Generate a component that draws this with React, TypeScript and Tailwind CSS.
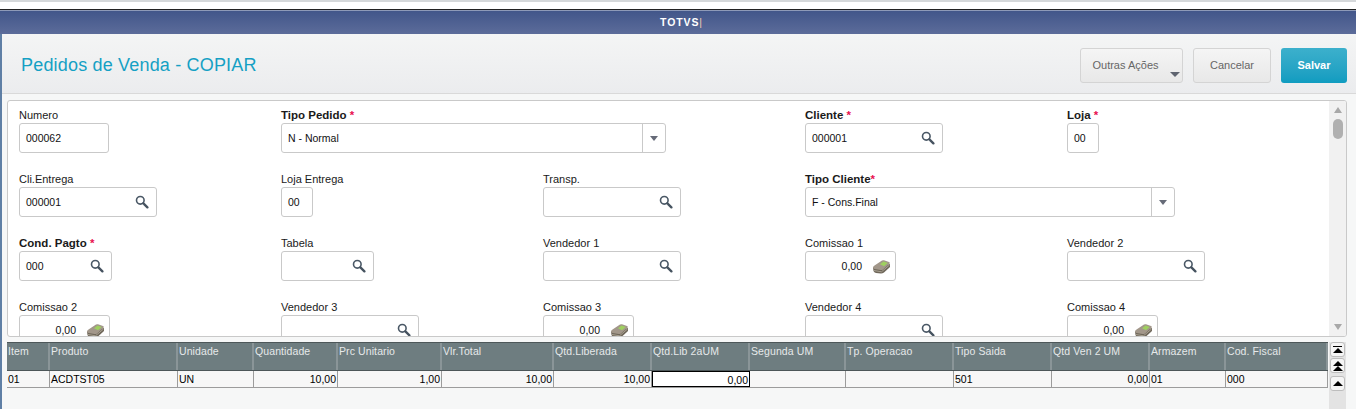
const font = "font-['Liberation_Sans',Arial,sans-serif]";

function Lupa() {
  return (
    <svg width="14" height="14" viewBox="0 0 14 14" className="shrink-0">
      <circle cx="5.3" cy="5.3" r="3.8" fill="#fff" stroke="#4a5866" strokeWidth="1.6" />
      <path d="M8.4 8.4 L12.4 12.4" stroke="#45525f" strokeWidth="2.3" strokeLinecap="round" />
    </svg>
  );
}

function Dinheiro() {
  return (
    <svg width="19" height="15" viewBox="0 0 19 15" className="shrink-0">
      <path d="M1 8.5 L1.5 12 Q2 13.5 4 14 L9 14.5 Q10.5 14.5 12 13.5 L18 8 L18 5 Z" fill="#6f675a" />
      <path d="M1 8.5 Q1 7.5 2.5 6.5 L10 1.5 Q11 1 12 1.3 L17 3 Q18.5 3.6 17.5 4.8 L11 10.5 Q10 11.3 8.5 11 L2.5 10 Q1 9.7 1 8.5 Z" fill="#a2978a" />
      <path d="M8 5.2 L11.5 2.4 L15.8 4 L12 7.2 Z" fill="#9fd05f" />
      <path d="M2 11.5 L9.5 12.8 L17.5 6" fill="none" stroke="#c2baa9" strokeWidth="0.7" />
    </svg>
  );
}

type Campo = {
  label: string;
  w?: number;
  kind?: 'text' | 'lupa' | 'select' | 'valor';
  value?: string;
  bold?: boolean;
  req?: string;
};

const campos: (Campo | null)[] = [
  { label: 'Numero', w: 90, value: '000062' },
  { label: 'Tipo Pedido', w: 385, kind: 'select', value: 'N - Normal', bold: true, req: ' *' },
  null,
  { label: 'Cliente', w: 138, kind: 'lupa', value: '000001', bold: true, req: ' *' },
  { label: 'Loja', w: 32, value: '00', bold: true, req: ' *' },

  { label: 'Cli.Entrega', w: 138, kind: 'lupa', value: '000001' },
  { label: 'Loja Entrega', w: 32, value: '00' },
  { label: 'Transp.', w: 138, kind: 'lupa' },
  { label: 'Tipo Cliente', w: 370, kind: 'select', value: 'F - Cons.Final', bold: true, req: '*' },
  null,

  { label: 'Cond. Pagto', w: 93, kind: 'lupa', value: '000', bold: true, req: ' *' },
  { label: 'Tabela', w: 93, kind: 'lupa' },
  { label: 'Vendedor 1', w: 138, kind: 'lupa' },
  { label: 'Comissao 1', w: 91, kind: 'valor', value: '0,00' },
  { label: 'Vendedor 2', w: 138, kind: 'lupa' },

  { label: 'Comissao 2', w: 91, kind: 'valor', value: '0,00' },
  { label: 'Vendedor 3', w: 138, kind: 'lupa' },
  { label: 'Comissao 3', w: 91, kind: 'valor', value: '0,00' },
  { label: 'Vendedor 4', w: 138, kind: 'lupa' },
  { label: 'Comissao 4', w: 91, kind: 'valor', value: '0,00' },
];

function Field({ c }: { c: Campo }) {
  const kind = c.kind ?? 'text';
  return (
    <div className="h-[64px]">
      <div className={`h-[15px] leading-[15px] text-[#1a1a1a] ${c.bold ? 'font-bold text-[11.5px]' : 'text-[11px]'}`}>
        {c.label}
        {c.req && <span className="text-[#e8104f]">{c.req}</span>}
      </div>
      <div
        className="h-[30px] flex items-center border border-[#c9c9c9] rounded-[3px] bg-white text-[10.5px] text-[#111]"
        style={{ width: c.w }}
      >
        {kind === 'valor' ? (
          <>
            <span className="w-[56px] pt-[1px] text-right">{c.value}</span>
            <span className="ml-[10px]"><Dinheiro /></span>
          </>
        ) : (
          <>
            <span className="flex-1 pt-[1px] pl-[6px]">{c.value}</span>
            {kind === 'lupa' && <span className="pr-[7px] flex"><Lupa /></span>}
            {kind === 'select' && (
              <span className="w-[23px] h-full border-l border-[#c9c9c9] flex items-center justify-center">
                <span className="w-0 h-0 border-x-[4px] border-x-transparent border-t-[5px] border-t-[#666b78]" />
              </span>
            )}
          </>
        )}
      </div>
    </div>
  );
}

const colunas: [string, number, string, boolean?][] = [
  ['Item', 43, '01'],
  ['Produto', 128, 'ACDTST05'],
  ['Unidade', 76, 'UN'],
  ['Quantidade', 84, '10,00', true],
  ['Prc Unitario', 104, '1,00', true],
  ['Vlr.Total', 112, '10,00', true],
  ['Qtd.Liberada', 98, '10,00', true],
  ['Qtd.Lib 2aUM', 98, '0,00', true],
  ['Segunda UM', 96, ''],
  ['Tp. Operacao', 108, ''],
  ['Tipo Saida', 98, '501'],
  ['Qtd Ven 2 UM', 98, '0,00', true],
  ['Armazem', 76, '01'],
  ['Cod. Fiscal', 102, '000'],
];

function NavBtn({ lines, top }: { lines: number; top?: boolean }) {
  return (
    <div className="w-[15px] h-[15px] rounded-[3px] border border-[#bdbdbd] bg-[#f5f5f5] flex flex-col items-center justify-center">
      {top && <span className="w-[9px] h-[1px] mb-[1px] bg-black" />}
      {Array.from({ length: lines }).map((_, i) => (
        <span key={i} className="w-0 h-0 border-x-[5px] border-x-transparent border-b-[5px] border-b-black" />
      ))}
    </div>
  );
}

export default function App() {
  return (
    <div className={`${font} w-[1356px] h-[409px] overflow-hidden bg-white`}>
      <div className="h-[2px] bg-[#d5d8da]" />
      <div className="h-[7px]" />
      <div className="h-[1px] bg-[#222]" />
      <div className="h-[24px] bg-gradient-to-b from-[#42568a] to-[#5c6c9a] border-t border-[#8e9ab8] flex items-center justify-center text-white text-[10.5px] font-bold tracking-[0.9px] pl-[7px]">
        TOTVS<span className="font-normal text-[#f3c9b0]">|</span>
      </div>
      <div className="h-[375px] border-l-2 border-[#5f7fa5] bg-[#f6f7f7] pr-[9px]">
        <div className="h-[60px] bg-gradient-to-b from-[#f4f5f5] to-[#ebecee] border-b border-[#d9d9d9] flex items-center pl-[19px] pr-[9px] pt-[3px] -mr-[9px]">
          <h1 className="flex-1 text-[18px] text-[#15a0c4] tracking-[0.18px]">Pedidos de Venda - COPIAR</h1>
          <button className="relative w-[103px] h-[35px] mr-[10px] rounded-[3px] border border-[#d4d4d4] bg-gradient-to-b from-[#f5f5f5] to-[#e8e8e8] text-[11px] text-[#666] pr-[12px]">
            Outras Ações
            <span className="absolute right-[2px] bottom-[5px] w-0 h-0 border-x-[5px] border-x-transparent border-t-[5px] border-t-[#5f6470]" />
          </button>
          <button className="w-[78px] h-[35px] mr-[10px] rounded-[3px] border border-[#d4d4d4] bg-gradient-to-b from-[#f5f5f5] to-[#e8e8e8] text-[11px] text-[#666]">
            Cancelar
          </button>
          <button className="w-[66px] h-[35px] rounded-[3px] bg-gradient-to-b from-[#3cb0cc] to-[#0f9cc0] text-[11px] font-bold text-white">
            Salvar
          </button>
        </div>

        <div className="ml-[5px] mt-[6px] h-[237px] border border-[#c9c9c9] rounded-[3px] bg-white flex overflow-hidden">
          <div className="flex-1 pl-[11px] pt-[7px] grid grid-cols-[repeat(5,262px)] content-start overflow-hidden">
            {campos.map((c, i) => (c ? <Field key={i} c={c} /> : <div key={i} />))}
          </div>
          <div className="w-[17px] bg-[#f1f1f1] flex flex-col items-center justify-between py-[6px]">
            <div className="flex flex-col items-center gap-[6px]">
              <span className="w-0 h-0 border-x-[4px] border-x-transparent border-b-[6px] border-b-[#a8a8a8]" />
              <span className="w-[10px] h-[20px] rounded-[5px] bg-[#b0b0b0]" />
            </div>
            <span className="w-0 h-0 border-x-[4px] border-x-transparent border-t-[6px] border-t-[#a8a8a8]" />
          </div>
        </div>

        <div className="ml-[5px] mt-[5px] flex">
          <div className="w-[1321px] text-[10.5px]">
            <div className="flex h-[29px] bg-[#6e7d80] border-y border-[#4d5759]">
              {colunas.map(([nome, w]) => (
                <div key={nome} className="shrink-0 border-r-2 border-[#8a9598] pl-[1px] pt-[1px] text-[#e6e9ea] leading-[14px] tracking-[0.1px]" style={{ width: w }}>
                  {nome}
                </div>
              ))}
            </div>
            <div className="flex h-[17px] bg-[#f7f7f7] border-b border-[#9c9c9c] text-black leading-[16px]">
              {colunas.map(([nome, w, valor, dir]) => (
                <div
                  key={nome}
                  className={`shrink-0 px-[1px] ${dir ? 'text-right' : ''} ${nome === 'Qtd.Lib 2aUM' ? 'border border-black bg-white' : 'border-r border-[#9c9c9c]'}`}
                  style={{ width: w }}
                >
                  {valor}
                </div>
              ))}
            </div>
          </div>
          <div className="w-[17px] h-[67px] ml-[1px] bg-[#e3e3e3] flex flex-col items-center gap-[1px]">
            <NavBtn lines={1} top />
            <NavBtn lines={2} />
            <span className="h-[1px]" />
            <NavBtn lines={1} />
          </div>
        </div>
      </div>
    </div>
  );
}
